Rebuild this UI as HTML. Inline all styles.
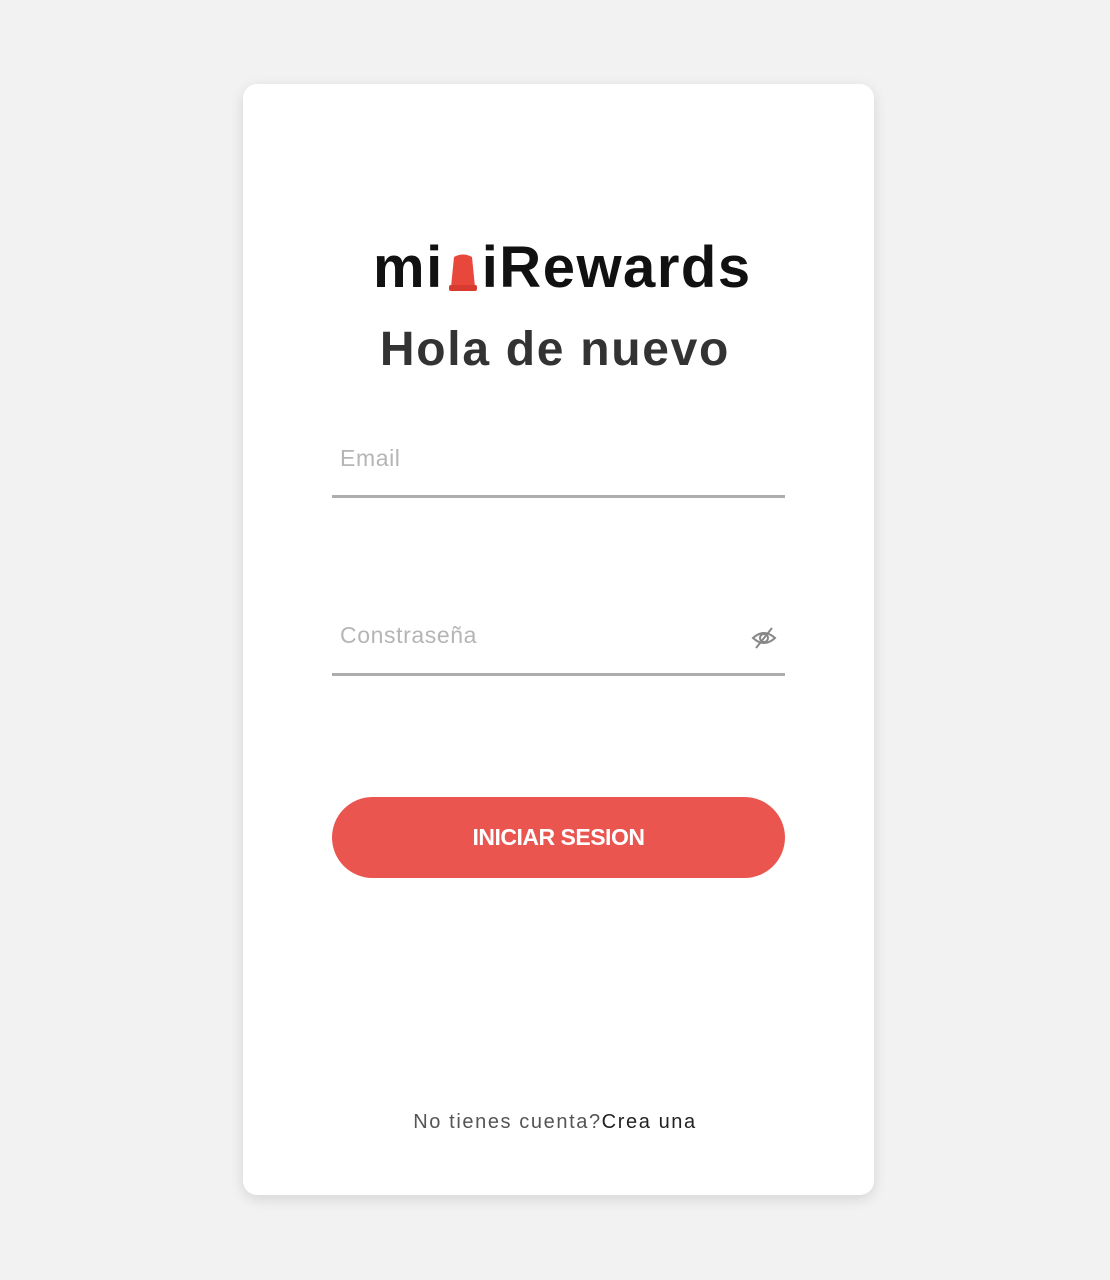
<!DOCTYPE html>
<html><head><style>
body{margin:0;background:#f2f2f2;font-family:"Liberation Sans",sans-serif;width:1110px;height:1280px;position:relative}
.card{position:absolute;left:243px;top:84px;width:631px;height:1111px;background:#fff;border-radius:14px;box-shadow:0 4px 14px rgba(0,0,0,0.12)}
.logo{position:absolute;left:373px;top:236px;font-size:58px;font-weight:bold;color:#111;letter-spacing:1.5px;white-space:nowrap;line-height:64px}
.h{position:absolute;left:0;width:1110px;text-align:center;top:322px;font-size:48px;font-weight:bold;color:#333;letter-spacing:1.7px}
.f{position:absolute;left:332px;width:453px;border-bottom:3px solid #adadad;color:#b5b5b5;font-size:23px;letter-spacing:0.6px}
.btn{position:absolute;left:332px;top:797px;width:453px;height:81px;border-radius:41px;background:#ea5550;color:#fff;text-align:center;line-height:81px;font-weight:bold;font-size:23px;letter-spacing:-0.5px}
.ft{position:absolute;left:0;width:1110px;text-align:center;top:1111px;font-size:20px;color:#555;letter-spacing:1.6px}
</style></head><body>
<div class="card"></div>
<div class="logo">mi<svg width="34" height="40" viewBox="0 0 34 40" style="vertical-align:-6px;margin:0 2px"><path d="M8 4 Q17 -1 26 4 L29 34 H5 Z" fill="#e8473c"/><rect x="3" y="32" width="28" height="6" rx="2" fill="#d93a30"/></svg>iRewards</div>
<div class="h">Hola de nuevo</div>
<div class="f" style="top:443px;height:52px;"><span style="position:absolute;left:8px;top:2px">Email</span></div>
<div class="f" style="top:620px;height:53px;"><span style="position:absolute;left:8px;top:2px">Constraseña</span>
<svg style="position:absolute;right:8px;top:6px" width="26" height="24" viewBox="0 0 26 24"><path d="M2 12 Q13 2 24 12 Q13 22 2 12Z" fill="none" stroke="#888" stroke-width="2"/><circle cx="13" cy="12" r="4" fill="none" stroke="#888" stroke-width="2"/><line x1="5" y1="22" x2="21" y2="2" stroke="#888" stroke-width="2"/></svg></div>
<div class="btn">INICIAR SESION</div>
<div class="ft">No tienes cuenta?<span style="color:#222">Crea una</span></div>
</body></html>
